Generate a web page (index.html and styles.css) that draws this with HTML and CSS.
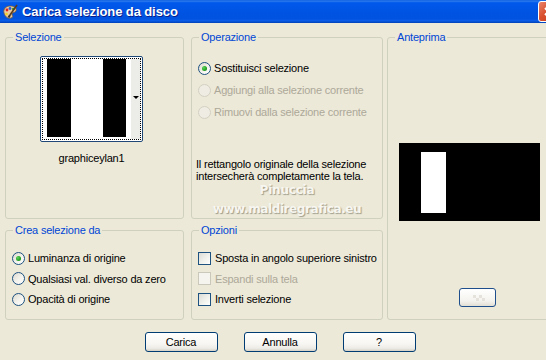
FILE: index.html
```html
<!DOCTYPE html>
<html>

<head>
    <meta charset="utf-8">
    <title>Carica selezione da disco</title>
    <link rel="stylesheet" href="styles.css">
</head>

<body>
    <div class="window">
        <div class="titlebar">
            <svg class="app-icon" width="16" height="16" viewBox="0 0 16 16">
                <path d="M2 9 C1 5 4 2 8 2 C12 2 15 4 14 7 C13 9 10 8 10 10 C10 12 12 13 9 14 C5 15 3 12 2 9 Z" fill="#E8C9A0" stroke="#7A5A3A" stroke-width="0.8" />
                <circle cx="5" cy="6" r="1.4" fill="#E02020" />
                <circle cx="8" cy="4.5" r="1.4" fill="#2060E0" />
                <circle cx="11.3" cy="5" r="1.3" fill="#20A030" />
                <circle cx="4.5" cy="10" r="1.3" fill="#F0D020" />
                <path d="M15 1 L8 11" stroke="#5A3A1A" stroke-width="1.6" />
                <path d="M8 11 L6.5 13.5" stroke="#303030" stroke-width="2" />
            </svg>
            <span class="title">Carica selezione da disco</span>
            <span class="close-btn">
                <svg width="11" height="11" viewBox="0 0 11 11">
                    <path d="M2 2 L9 9 M9 2 L2 9" stroke="#fff" stroke-width="2" />
                </svg>
            </span>
        </div>

        <div class="groups">
            <fieldset class="group sel-group">
                <legend>Selezione</legend>
                <div class="thumb-col">
                    <div class="thumb">
                        <div class="thumb-focus">
                            <div class="thumb-img"></div>
                            <div class="thumb-strip"><span class="arrow"></span></div>
                        </div>
                    </div>
                    <div class="thumb-name">graphiceylan1</div>
                </div>
            </fieldset>

            <fieldset class="group op-group">
                <legend>Operazione</legend>
                <div class="op-list">
                    <div class="opt"><span class="radio on"></span>Sostituisci selezione</div>
                    <div class="opt disabled"><span class="radio"></span>Aggiungi alla selezione corrente</div>
                    <div class="opt disabled"><span class="radio"></span>Rimuovi dalla selezione corrente</div>
                </div>
                <p class="note">Il rettangolo originale della selezione intersecherà completamente la tela.</p>
                <div class="watermark">
                    <div class="wm-name">Pinuccia</div>
                    <div class="wm-site">www.maldiregrafica.eu</div>
                </div>
            </fieldset>

            <fieldset class="group preview-group">
                <legend>Anteprima</legend>
                <div class="preview"><div class="preview-shape"></div></div>
                <div class="preview-btn">
                    <svg width="14" height="8" viewBox="0 0 14 8">
                        <rect x="2" y="1" width="3" height="3" fill="#E4E2DA" />
                        <rect x="8" y="1" width="3" height="3" fill="#E4E2DA" />
                        <rect x="5" y="4" width="3" height="3" fill="#E4E2DA" />
                        <rect x="11" y="4" width="3" height="3" fill="#E4E2DA" />
                    </svg>
                </div>
            </fieldset>

            <fieldset class="group src-group">
                <legend>Crea selezione da</legend>
                <div class="opt-list">
                    <div class="opt"><span class="radio on"></span>Luminanza di origine</div>
                    <div class="opt"><span class="radio"></span>Qualsiasi val. diverso da zero</div>
                    <div class="opt"><span class="radio"></span>Opacità di origine</div>
                </div>
            </fieldset>

            <fieldset class="group opts-group">
                <legend>Opzioni</legend>
                <div class="opt-list">
                    <div class="opt"><span class="check"></span>Sposta in angolo superiore sinistro</div>
                    <div class="opt disabled"><span class="check"></span>Espandi sulla tela</div>
                    <div class="opt"><span class="check"></span>Inverti selezione</div>
                </div>
            </fieldset>
        </div>

        <div class="buttons">
            <div class="btn">Carica</div>
            <div class="btn">Annulla</div>
            <div class="btn">?</div>
        </div>
    </div>
</body>

</html>
```

FILE: styles.css
```css
html, body {
    margin: 0;
    padding: 0;
    overflow: hidden;
}

body {
    background: #ECE9D8;
    font-family: "Liberation Sans", Arial, sans-serif;
    font-size: 11px;
    letter-spacing: -0.2px;
    color: #000;
}

.window {
    width: 560px;
}

.titlebar {
    height: 23px;
    display: flex;
    align-items: center;
    padding: 0 1px 0 2px;
    box-sizing: border-box;
    background: linear-gradient(to bottom, #0A5DDB 0%, #2D7BF0 5%, #0058EB 12%, #0054E3 50%, #0052DF 80%, #0A5DE8 90%, #0040B8 100%);
}

.app-icon {
    flex: none;
}

.title {
    margin-left: 4px;
    color: #fff;
    font-weight: bold;
    font-size: 13px;
    letter-spacing: -0.1px;
    text-shadow: 1px 1px 0 #0A1E8A;
}

.close-btn {
    flex: none;
    margin-left: auto;
    width: 21px;
    height: 21px;
    box-sizing: border-box;
    border: 1px solid #fff;
    border-radius: 3px;
    background: linear-gradient(135deg, #E8836A 0%, #D9502E 45%, #C43A1A 100%);
    display: flex;
    align-items: center;
    justify-content: center;
}

/* group boxes */

.groups {
    display: grid;
    grid-template-columns: 182px 192px 181px;
    grid-template-rows: 189px 97px;
    column-gap: 4px;
    row-gap: 4px;
    padding: 7px 0 0 5px;
}

.group {
    margin: 0;
    padding: 0;
    min-width: 0;
    box-sizing: border-box;
    height: 100%;
    border: 1px solid #D0D0BF;
    border-radius: 3px;
}

.group legend {
    margin-left: 7px;
    padding: 0 2px;
    line-height: 14px;
    color: #0046D5;
}

.sel-group {
    width: 179px;
}

.preview-group {
    grid-row: 1 / 3;
    grid-column: 3;
}

.src-group {
    width: 179px;
}

/* thumbnail */

.thumb-col {
    display: inline-flex;
    flex-direction: column;
    align-items: center;
    margin: 12px 0 0 34px;
}

.thumb {
    width: 103px;
    height: 86px;
    box-sizing: border-box;
    border: 1px solid #1F4877;
    border-radius: 2px;
    padding: 1px;
    background: #fff;
}

.thumb-focus {
    height: 100%;
    box-sizing: border-box;
    border: 1px dotted #000;
    display: flex;
    padding-left: 4px;
}

.thumb-img {
    width: 84px;
    height: 78px;
    background: linear-gradient(to right, #000 0, #000 24px, #fff 24px, #fff 56px, #000 56px, #000 79px, #fff 79px);
}

.thumb-strip {
    flex: 1;
    background: #ECECE8;
    position: relative;
}

.arrow {
    position: absolute;
    left: 2px;
    top: 37px;
    border-left: 3px solid transparent;
    border-right: 3px solid transparent;
    border-top: 3px solid #000;
}

.thumb-name {
    margin-top: 10px;
    line-height: 13px;
}

/* options */

.op-list {
    margin-top: 13px;
    padding-left: 6px;
}

.op-list .opt {
    height: 22px;
}

.opt-list {
    margin-top: 11px;
    padding-left: 6px;
}

.opt-list .opt {
    height: 20.5px;
}

.opt {
    display: flex;
    align-items: center;
    white-space: nowrap;
}

.opt.disabled {
    color: #ACA899;
}

.radio {
    flex: none;
    width: 13px;
    height: 13px;
    box-sizing: border-box;
    border: 1px solid #1C5180;
    border-radius: 50%;
    margin-right: 3px;
    background: linear-gradient(135deg, #DCD9CD 0%, #F4F3EE 55%, #fff 100%);
    display: flex;
    align-items: center;
    justify-content: center;
}

.radio.on::after {
    content: "";
    width: 5px;
    height: 5px;
    border-radius: 50%;
    background: radial-gradient(circle at 35% 35%, #5ED35E 0%, #21A121 60%, #0E7A0E 100%);
}

.disabled .radio {
    border-color: #D4D0C2;
    background: #EEECE3;
}

.check {
    flex: none;
    width: 13px;
    height: 13px;
    box-sizing: border-box;
    border: 1px solid #1C5180;
    margin-right: 4px;
    background: linear-gradient(135deg, #DCDCD7 0%, #F2F2EE 60%, #fff 100%);
}

.disabled .check {
    border-color: #CAC8BB;
    background: #F5F4EE;
}

.note {
    margin: 35px 0 0 4px;
    line-height: 12px;
    width: 180px;
}

.watermark {
    margin-top: 1px;
    text-align: center;
    font-family: "DejaVu Sans", sans-serif;
    font-weight: bold;
    color: #F7F6F0;
    text-shadow: 1px 1px 1px #A09D8C;
}

.wm-name {
    font-size: 12px;
    line-height: 15px;
}

.wm-site {
    margin-top: 3px;
    font-size: 12px;
    line-height: 16px;
    letter-spacing: -0.4px;
}

/* preview */

.preview {
    width: 141px;
    height: 78px;
    margin: 99px 0 0 11px;
    background: #000;
    display: flex;
}

.preview-shape {
    width: 25px;
    height: 61px;
    margin: 9px 0 0 22px;
    background: #fff;
}

.preview-btn {
    width: 37px;
    height: 19px;
    box-sizing: border-box;
    margin: 67px auto 0;
    border: 1px solid #1F4E8C;
    border-radius: 3px;
    background: linear-gradient(to bottom, #fff 0%, #F4F3EE 70%, #E2DFD4 100%);
    display: flex;
    align-items: center;
    justify-content: center;
}

/* buttons */

.buttons {
    display: flex;
    justify-content: center;
    gap: 26px;
    margin-top: 12px;
}

.btn {
    width: 73px;
    height: 20px;
    box-sizing: border-box;
    border: 1px solid #003C74;
    border-radius: 3px;
    background: linear-gradient(to bottom, #fff 0%, #F7F6F2 60%, #ECEBE6 85%, #D6D0C5 100%);
    display: flex;
    align-items: center;
    justify-content: center;
}
```
